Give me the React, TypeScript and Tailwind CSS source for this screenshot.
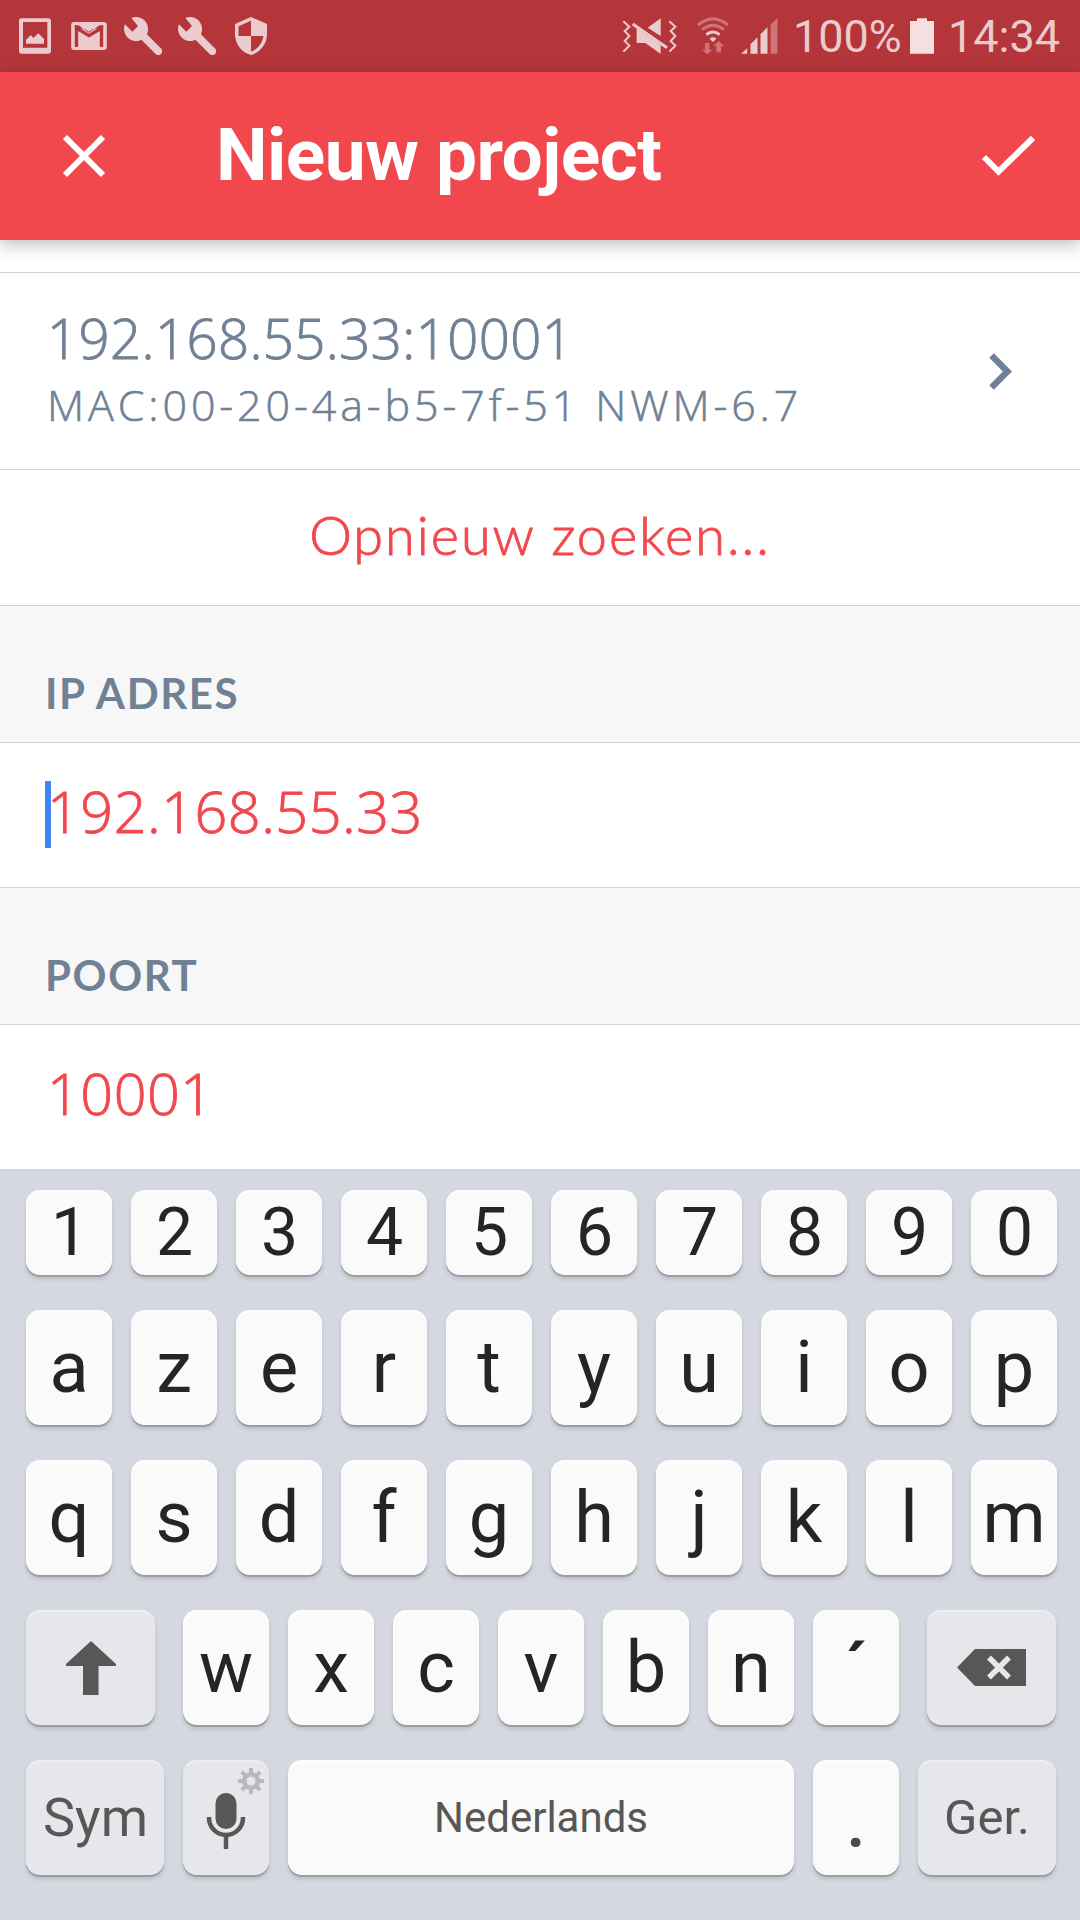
import type { ReactNode } from "react"
import clsx from "clsx"

interface KeyProps {
  children: ReactNode
  className?: string
  muted?: boolean
}

function Key({ children, className, muted }: KeyProps) {
  return (
    <button
      className={clsx(
        "relative flex shrink-0 items-center justify-center rounded-[14px] leading-none",
        muted
          ? "bg-[#e6e7eb] text-[#575757] shadow-[0_2px_0_#9b9da2,0_4px_4px_rgba(0,0,0,0.13),inset_0_2px_2px_rgba(255,255,255,0.4)]"
          : "bg-[#fafafa] text-[#252525] shadow-[0_2px_0_#9b9da2,0_4px_4px_rgba(0,0,0,0.13),inset_0_3px_2px_rgba(255,255,255,0.7)]",
        className
      )}
    >
      {children}
    </button>
  )
}

function WrenchIcon() {
  return (
    <svg className="h-[38px] w-[38px]" viewBox="0 0 114 114">
      <path d="M22 3A36 36 0 1 1 3 22L25 44L42 27Z" fill="#ebcbcd" />
      <path d="M52 52L103 103" stroke="#ebcbcd" strokeWidth="23" strokeLinecap="round" />
    </svg>
  )
}

function StatusBar() {
  return (
    <div className="flex h-[72px] items-center justify-between bg-[#b4363b] pr-[20px] pl-[19px] text-[#ebcbcd]">
      <div className="flex items-center">
        <svg className="h-[36px] w-[32px]" viewBox="0 0 96 108">
          <path
            fillRule="evenodd"
            fill="#ebcbcd"
            d="M8 1H88Q96 1 96 9V99Q96 107 88 107H8Q0 107 0 99V9Q0 1 8 1ZM12 12V89H85V12ZM21 77V66L35 51L43 60L58 46L75 63V77Z"
          />
        </svg>
        <svg className="ml-[20px] h-[28px] w-[36px]" viewBox="0 0 107 84">
          <rect width="107" height="84" rx="9" fill="#ebcbcd" />
          <path d="M16 75V18L53.5 41L91 18V75" fill="none" stroke="#b4363b" strokeWidth="10" />
          <path d="M11 10H22L53.5 32L85 10H96V20H11Z" fill="#b4363b" />
          <path d="M23 8L53.5 29L84 8Z" fill="#ebcbcd" />
        </svg>
        <div className="ml-[17px] flex gap-[16px]">
          <WrenchIcon />
          <WrenchIcon />
        </div>
        <svg className="ml-[19px] h-[38px] w-[32px]" viewBox="3 1 18 22" preserveAspectRatio="none">
          <path
            fill="#ebcbcd"
            d="M12 1L3 5v6c0 5.55 3.84 10.74 9 12 5.16-1.26 9-6.45 9-12V5l-9-4zm0 10.99h7c-.53 4.12-3.28 7.79-7 8.94V12H5V6.3l7-3.11v8.8z"
          />
        </svg>
      </div>

      <div className="flex items-center text-[45px] leading-none">
        {/* Sound off, vibrate */}
        <svg className="h-[38px] w-[56px]" viewBox="0 0 168 114" fill="none" stroke="#ebcbcd">
          <path d="M4 13L22 29L8 42L22 57L8 72L22 86L4 104" strokeWidth="6" />
          <path d="M142 13L160 29L146 42L160 57L146 72L160 86L142 104" strokeWidth="6" />
          <path d="M77 32L116 4V57Z" fill="#ebcbcd" stroke="none" />
          <path d="M44 34V78H70L116 111V84Z" fill="#ebcbcd" stroke="none" />
          <path d="M32 21L135 92" strokeWidth="9" />
        </svg>
        <svg className="ml-[19px] h-[38px] w-[32px]" viewBox="0 0 96 114" fill="none">
          <path d="M3 24Q48 -13 93 24" stroke="#ce7379" strokeWidth="9" />
          <path d="M15 38Q48 12 81 38" stroke="#ce7379" strokeWidth="9" />
          <path d="M28 53Q48 37 68 53" stroke="#ebcbcd" strokeWidth="9" />
          <path d="M38 65Q48 57 58 65L48 75Z" fill="#ebcbcd" />
          <path d="M24 78H37V98H47L31 112L15 98H24Z" fill="#ce7379" />
          <path d="M58 106H72V88H82L65 72L49 88H58Z" fill="#ce7379" />
        </svg>
        <svg className="ml-[12px] h-[36px] w-[37px]" viewBox="0 0 110 108" fill="#ebcbcd">
          <path d="M0 107L18 91V107Z" />
          <path d="M28 107V79L49 58V107Z" />
          <path d="M58 107V49L79 28V107Z" />
          <path d="M88 107V20L109 0V107Z" fill="#ce7379" />
        </svg>
        <span className="ml-[15px] w-[112px] whitespace-nowrap">100%</span>
        <svg className="ml-[5px] h-[36px] w-[24px]" viewBox="0 0 72 108">
          <path d="M0 9H21V1H51V9H72V107H0Z" fill="#f5dfe1" />
        </svg>
        <span className="ml-[14px]">14:34</span>
      </div>
    </div>
  )
}

function AppBar() {
  return (
    <header className="relative z-10 flex h-[168px] items-center bg-[#f1484e] pr-[45px] pl-[62px] text-white shadow-[0_5px_15px_rgba(0,0,0,0.25)]">
      <svg className="h-[44px] w-[44px]" viewBox="0 0 44 44" fill="none" stroke="white" strokeWidth="6">
        <path d="M3 3L41 41M41 3L3 41" />
      </svg>
      <h1 className="-mt-[2px] ml-[110px] flex-1 text-[73px] leading-none font-bold tracking-[-0.5px]">Nieuw project</h1>
      <svg className="h-[42px] w-[54px]" viewBox="0 0 54 42" fill="none" stroke="white" strokeWidth="6">
        <path d="M3 22L17.5 36.5L52 3" />
      </svg>
    </header>
  )
}

function SectionTitle({ children }: { children: ReactNode }) {
  return (
    <div className="h-[137px] border-b border-[#d0d3d7] bg-[#f7f7f7] px-[45px] pt-[66px] font-['Lato',sans-serif] text-[42px] leading-[43px] font-bold tracking-[1.6px] text-[#718195]">
      {children}
    </div>
  )
}

const topRows = [
  { keys: "1234567890", className: "h-[85px] w-[86px] pt-[1px] pl-[1px] text-[66px]" },
  { keys: "azertyuiop", className: "h-[115px] w-[86px] text-[72px]" },
  { keys: "qsdfghjklm", className: "h-[115px] w-[86px] text-[72px]" },
]

function Keyboard() {
  return (
    <div className="flex h-[751px] flex-col gap-[35px] border-t border-[#cfd1d3] bg-[#d5d8e0] pt-[20px] pl-[26px]">
      {topRows.map((row) => (
        <div key={row.keys} className="flex gap-[19px]">
          {row.keys.split("").map((char) => (
            <Key key={char} className={row.className}>
              {char}
            </Key>
          ))}
        </div>
      ))}

      <div className="flex">
        <Key muted className="mr-[28px] h-[115px] w-[129px]">
          <svg className="h-[54px] w-[50px]" viewBox="0 0 50 54">
            <path d="M25 0L50 23V25H32.5V54H17V25H0V23Z" fill="#575757" />
          </svg>
        </Key>
        <div className="flex gap-[19px]">
          {"wxcvbn".split("").map((char) => (
            <Key key={char} className="h-[115px] w-[86px] text-[72px]">
              {char}
            </Key>
          ))}
          <Key className="h-[115px] w-[86px] pt-[6px] text-[72px] font-medium">´</Key>
        </div>
        <Key muted className="ml-[28px] h-[115px] w-[129px]">
          <svg className="mr-[1px] h-[37px] w-[69px]" viewBox="0 0 69 37">
            <path d="M0 18.5L18 0H69V37H18Z" fill="#575757" />
            <path d="M32 8.5L52 28.5M52 8.5L32 28.5" stroke="#e6e7eb" strokeWidth="5.5" />
          </svg>
        </Key>
      </div>

      <div className="flex gap-[19px]">
        <Key muted className="h-[115px] w-[138px] pl-[1px] text-[54px]">
          Sym
        </Key>
        <Key muted className="h-[115px] w-[86px]">
          <svg className="mt-[7px] mr-[1px] h-[57px] w-[40px]" viewBox="0 0 40 57" fill="none">
            <rect x="9.5" y="0" width="21" height="36" rx="10.5" fill="#575757" />
            <path d="M3 24V25A17 17 0 0 0 37 25V24M20 42V56" stroke="#575757" strokeWidth="4.5" />
          </svg>
          <svg className="absolute top-[8px] right-[5px] h-[26px] w-[26px]" viewBox="-13 -13 26 26" fill="none" stroke="#b7b8bc">
            <circle r="6.8" strokeWidth="4.6" />
            <path
              strokeWidth="4"
              d="M0 -8V-13M0 8V13M-8 0H-13M8 0H13M-5.7 -5.7L-9.2 -9.2M5.7 5.7L9.2 9.2M-5.7 5.7L-9.2 9.2M5.7 -5.7L9.2 -9.2"
            />
          </svg>
        </Key>
        <Key className="h-[115px] w-[506px] text-[42px]">
          <span className="text-[#575757]">Nederlands</span>
        </Key>
        <Key className="h-[115px] w-[86px] text-[86px]">
          <span className="text-[#4a4a4a]">.</span>
        </Key>
        <Key muted className="h-[115px] w-[138px] text-[49px]">
          Ger.
        </Key>
      </div>
    </div>
  )
}

export default function App() {
  return (
    <div className="h-[1920px] w-[1080px] overflow-hidden bg-white font-['Roboto',sans-serif]">
      <StatusBar />
      <AppBar />

      <div className="h-[33px] border-b border-[#cdd0d6]" />
      <div className="flex h-[197px] items-center justify-between border-b border-[#d0d3d7] pr-[68px] pl-[47px] text-[#718195]">
        <div className="pt-[2px] font-['Open_Sans',sans-serif] font-light">
          <div className="text-[54.5px] leading-[66px] tracking-[0.4px] [-webkit-text-stroke:0.9px_#718195]">
            192.168.55.33:10001
          </div>
          <div className="text-[43px] leading-[68px] tracking-[3.9px] [-webkit-text-stroke:0.6px_#718195]">
            MAC:00-20-4a-b5-7f-51 NWM-6.7
          </div>
        </div>
        <svg className="h-[37px] w-[23px]" viewBox="0 0 23 37" fill="none" stroke="#718195" strokeWidth="6.5">
          <path d="M2.5 2.5L18.5 18.5L2.5 34.5" />
        </svg>
      </div>
      <div className="h-[136px] border-b border-[#d0d3d7] text-center font-['Lato',sans-serif] text-[54px] leading-[129px] font-light tracking-[2px] text-[#f1484e] [-webkit-text-stroke:0.9px_#f1484e]">
        Opnieuw zoeken...
      </div>

      <SectionTitle>IP ADRES</SectionTitle>
      <div className="flex h-[145px] items-start border-b border-[#d0d3d7] pt-[38px] pl-[45px]">
        <div className="h-[67px] w-[6px] bg-[#4285f6]" />
        <span className="-ml-[4px] font-['Open_Sans',sans-serif] text-[57.5px] leading-[60px] font-light tracking-[0.5px] text-[#f1484e] [-webkit-text-stroke:0.9px_#f1484e]">
          192.168.55.33
        </span>
      </div>

      <SectionTitle>POORT</SectionTitle>
      <div className="h-[144px] pt-[38px] pl-[47px] font-['Open_Sans',sans-serif] text-[57.5px] leading-[60px] font-light tracking-[0.5px] text-[#f1484e] [-webkit-text-stroke:0.9px_#f1484e]">
        10001
      </div>

      <Keyboard />
    </div>
  )
}
